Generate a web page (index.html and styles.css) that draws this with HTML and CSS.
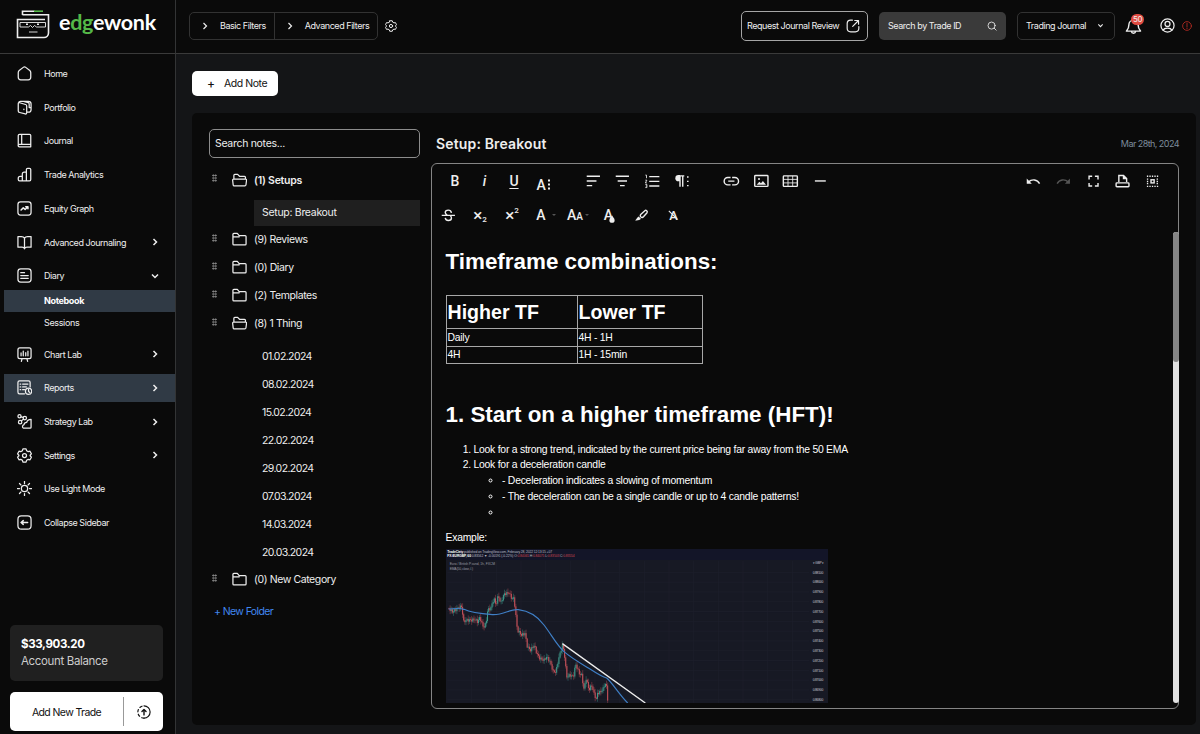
FILE: index.html
```html
<!DOCTYPE html>
<html lang="en">
<head>
  <meta charset="UTF-8">
  <meta name="viewport" content="width=device-width, initial-scale=1.0">
  <title>Edgewonk - Notebook</title>
  <link rel="stylesheet" href="styles.css">
</head>
<body>
  <div class="app">
    <div class="brand">
      <svg class="brand-face" viewBox="0 0 34 30">
        <path d="M6.500 6V2.200h12" />
        <path class="green" d="M18 2.200h9" />
        <path d="M6.500 5.800h26v18.200a4.500 4.500 0 0 1-4.500 4.500H1.500V10.500h27.500" />
        <path class="thin" d="M4 13.500h25.500v4.500H20.500l-2-1.500-2 2-2-2-2 1.500H4zM13 23h8.500" />
        <path class="dot" d="M10 15.200h2M21 15.200h2" />
      </svg>
      <div class="brand-name">e<span>dg</span>ewonk</div>
    </div>

    <header class="topbar">
      <div class="filters">
        <button><svg class="chev" viewBox="0 0 8 8"><path d="M2.500 1l3 3-3 3" /></svg>Basic Filters</button>
        <button><svg class="chev" viewBox="0 0 8 8"><path d="M2.500 1l3 3-3 3" /></svg>Advanced Filters</button>
      </div>
      <svg class="icon gear-small" viewBox="0 0 24 24"><circle cx="12" cy="12" r="3.200" /><path d="M9.500 1.500h5l.8 2.800 2.700 1.500 2.800-.7 2.200 4.200-2 2.300v.8l2 2.300-2.200 4.200-2.800-.7-2.700 1.500-.8 2.800h-5l-.8-2.800L6 18.200l-2.800.7L1 14.700l2-2.300v-.8L1 9.300l2.200-4.200 2.800.7 2.700-1.500z" /></svg>
      <div class="spacer"></div>
      <button class="review">Request Journal Review
        <svg class="icon" viewBox="0 0 24 24"><path d="M11 2H8a6 6 0 0 0-6 6v8a6 6 0 0 0 6 6h8a6 6 0 0 0 6-6v-3M11.500 12.500L21 3M15 2.500h6.500V9" /></svg>
      </button>
      <div class="trade-search">Search by Trade ID
        <svg class="icon" viewBox="0 0 24 24"><circle cx="11" cy="11" r="8.500" /><path d="M17 17l5 5" /></svg>
      </div>
      <button class="journal-select">Trading Journal
        <svg class="chev" viewBox="0 0 8 8"><path d="M1.500 2.800L4 5.300l2.500-2.500" /></svg>
      </button>
      <div class="bell">
        <svg class="icon" viewBox="0 0 24 24"><path d="M12 3a6.500 6.500 0 0 0-6.500 6.500c0 5-1.500 6.500-3.500 9h20c-2-2.500-3.500-4-3.500-9A6.500 6.500 0 0 0 12 3zM9 19c.5 3.500 5.500 3.500 6 0" /></svg>
        <span class="badge">50</span>
      </div>
      <svg class="icon user" viewBox="0 0 24 24"><circle cx="12" cy="12" r="10.500" /><circle cx="12" cy="9.500" r="4" /><path d="M5 19.500c2-4.500 12-4.500 14 0" /></svg>
      <svg class="icon alert" viewBox="0 0 24 24"><circle cx="12" cy="12" r="10.500" /><path d="M12 5.500v8M12 16.500v2" /></svg>
    </header>

    <aside class="sidebar">
      <nav>
        <a class="nav-item"><svg class="icon" viewBox="0 0 24 24"><path d="M2 10.500c0-1.500.5-2.300 1.500-3.200L10 2.200c1.300-1 2.700-1 4 0l6.500 5.100c1 .9 1.500 1.700 1.500 3.200V18a4 4 0 0 1-4 4H6a4 4 0 0 1-4-4z" /></svg>Home</a>
        <a class="nav-item"><svg class="icon" viewBox="0 0 24 24"><path d="M2 6c0-1.500.8-2 2.200-1.600l9.500 2.800c1.300.4 1.800 1 1.800 2.300v11c0 1.500-.8 2.200-2.200 1.800l-9-2.300C2.700 19.600 2 19 2 17.500zM2.500 4.500C2.800 3 3.500 2 5.500 2H18c3 0 4.500 1.300 4.500 4v9.500c0 2.500-1.500 4-4 4h-3M12 2.500l6 1.800c1.200.5 1.500 1 1.500 2.200V12h3M11 14.500v.8" /></svg>Portfolio</a>
        <a class="nav-item"><svg class="icon" viewBox="0 0 24 24"><path d="M2 20V4c0-1.500.5-2 2-2h16c1 0 2 .5 2 2v18H4c-3 0-3-4 0-4h18M7.500 2v16" /></svg>Journal</a>
        <a class="nav-item"><svg class="icon" viewBox="0 0 24 24"><path d="M8.500 22H4c-1.500 0-2-.5-2-2v-2c0-2 1-3 3-3h3.500zM8.500 22V11c0-2 1-3 3-3H15v14zM15 22V4c0-1.500.5-2 2-2h3c1.500 0 2 .5 2 2v16c0 1.500-.5 2-2 2z" /></svg>Trade Analytics</a>
        <a class="nav-item"><svg class="icon" viewBox="0 0 24 24"><rect x="1.500" y="1.500" width="21" height="21" rx="4" /><path class="bold" d="M6.500 14.500l3.500-3.500 3 2.500 4-4M14 9h3.500v3.500" /></svg>Equity Graph</a>
        <a class="nav-item"><svg class="icon" viewBox="0 0 24 24"><path d="M12 5c-1-1.800-3-2.500-5-2.500H1.500v17H8c2 0 3.500 1 4 2.500.5-1.500 2-2.500 4-2.500h6.500v-17H17c-2 0-4 .7-5 2.500zV22" /></svg>Advanced Journaling<svg class="arrow" viewBox="0 0 8 8"><path d="M2.500 1l3 3-3 3" /></svg></a>
        <a class="nav-item"><svg class="icon" viewBox="0 0 24 24"><rect x="1.500" y="1.500" width="21" height="21" rx="4.500" /><path d="M6 7.500h6M6 12h12M6 16.500h12" /></svg>Diary<svg class="arrow" viewBox="0 0 8 8"><path d="M1 2.500l3 3 3-3" /></svg></a>
        <div class="sub-nav">
          <a class="active">Notebook</a>
          <a>Sessions</a>
        </div>
        <a class="nav-item"><svg class="icon" viewBox="0 0 24 24"><rect x="1.500" y="1.500" width="21" height="17" rx="3" /><path d="M8 19l-1 4M16 19l1 4M6.500 14V9.500M10 14V6.500M14 14V9M17.500 14V6.500" /></svg>Chart Lab<svg class="arrow" viewBox="0 0 8 8"><path d="M2.500 1l3 3-3 3" /></svg></a>
        <a class="nav-item active"><svg class="icon" viewBox="0 0 24 24"><path d="M21 11V4c0-1.500-.8-2.500-2.500-2.500H4C2.300 1.500 1.500 2.500 1.500 4v15c0 2 1 3 2.500 3h8M5 6.500h1M9 6.500h8.500M5 11h1M9 11h6M5 15.500h1M9 15.500h3" /><circle cx="18.500" cy="18" r="5" /><path d="M18.500 15v3.500l2 1.500" /></svg>Reports<svg class="arrow" viewBox="0 0 8 8"><path d="M2.500 1l3 3-3 3" /></svg></a>
        <a class="nav-item"><svg class="icon" viewBox="0 0 24 24"><circle cx="4" cy="3.500" r="2.500" /><circle cx="5" cy="13" r="2.700" /><circle cx="12.500" cy="6.500" r="2.700" /><path d="M22.500 8.500V21c0 1-.5 1.500-1.500 1.500H10c-2-1.500-1.500-4.500 1-5 .5-2.500 2-4 4.500-4 .5-3 3-5 7-5zM6.500 4.500l3.500 1M7 11l3.300-2.700" /></svg>Strategy Lab<svg class="arrow" viewBox="0 0 8 8"><path d="M2.500 1l3 3-3 3" /></svg></a>
        <a class="nav-item"><svg class="icon" viewBox="0 0 24 24"><circle cx="12" cy="12" r="3.200" /><path d="M9.500 1.500h5l.8 2.800 2.700 1.500 2.800-.7 2.200 4.200-2 2.300v.8l2 2.300-2.200 4.200-2.800-.7-2.700 1.500-.8 2.800h-5l-.8-2.800L6 18.200l-2.800.7L1 14.700l2-2.300v-.8L1 9.300l2.200-4.200 2.800.7 2.700-1.500z" /></svg>Settings<svg class="arrow" viewBox="0 0 8 8"><path d="M2.500 1l3 3-3 3" /></svg></a>
        <a class="nav-item"><svg class="icon" viewBox="0 0 24 24"><circle cx="12" cy="12" r="5" /><path d="M12 .5v3.500M12 20v3.500M.5 12H4M20 12h3.500M4 4l2.300 2.300M17.700 17.700L20 20M4 20l2.300-2.300M17.700 6.300L20 4" /></svg>Use Light Mode</a>
        <a class="nav-item"><svg class="icon" viewBox="0 0 24 24"><rect x="1.500" y="1.500" width="21" height="21" rx="5.500" /><path class="bold" d="M6.500 12H17M10 9l-3.500 3 3.500 3" /></svg>Collapse Sidebar</a>
      </nav>

      <div class="balance">
        <strong>$33,903.20</strong>
        <span>Account Balance</span>
      </div>
      <div class="add-trade">
        <span>Add New Trade</span>
        <i><svg class="icon" viewBox="0 0 24 24"><path d="M12 1.500a10.500 10.500 0 0 1 0 21" /><path stroke-dasharray="4 4.200" d="M12 22.500a10.500 10.500 0 0 1 0-21" /><path class="bold" d="M12 17V8M8.500 11L12 7.500l3.500 3.500" /></svg></i>
      </div>
    </aside>

    <main class="main">
      <button class="add-note"><b>+</b>Add Note</button>

      <section class="panel">
        <div class="notes">
          <div class="notes-search">Search notes...</div>
          <div id="folders"></div>
          <a class="new-folder">+ New Folder</a>
        </div>

        <div class="note">
          <div class="note-head">
            <h3>Setup: Breakout</h3>
            <time>Mar 28th, 2024</time>
          </div>
          <div class="editor">
            <div class="toolbar">
              <div class="tools">
                <span class="t-bold">B</span>
                <span class="t-italic">i</span>
                <span class="t-under">U</span>
                <span class="t-more">A<svg viewBox="0 0 3 11"><path d="M0 1.500h2M0 5.500h2M0 9.500h2" /></svg></span>
              </div>
              <div class="tools">
                <span><svg viewBox="0 0 24 24"><path d="M3.500 5.500h17M3.500 11.500h12.500M3.500 17.500h7" /></svg></span>
                <span><svg viewBox="0 0 24 24"><path d="M3.500 5.500h17M6 11.500h12M9 17.500h6" /></svg></span>
                <span><svg viewBox="0 0 24 24"><path d="M8 6h13M8 12h13M8 18h13" /><path class="fine" d="M3 4h1.500v4M3 10.500h2L3 14h2M3 16h2v4H3M3.500 18H5" /></svg></span>
                <span><svg viewBox="0 0 24 24"><path d="M9 5v14M12.500 5v14M14.500 5H8" /><path class="fill" d="M9 4H7a4 4 0 0 0 0 8h2z" /><path d="M18 6.500h2M18 12h2M18 17.500h2" /></svg></span>
              </div>
              <div class="tools">
                <span><svg viewBox="0 0 24 24"><path d="M11 7H7.500a4.500 4.500 0 0 0 0 9.500H11M13 7h3.500a4.500 4.500 0 0 1 0 9.500H13M8 11.700h8" /></svg></span>
                <span><svg viewBox="0 0 24 24"><rect x="3.500" y="4.500" width="17" height="14" rx="1" /><path class="fill" d="M6 16.500l3.500-4 2 2 2.500-3 4 5z" /><circle class="fill" cx="9" cy="9" r="1.300" /></svg></span>
                <span><svg viewBox="0 0 24 24"><rect x="3" y="5" width="18" height="13.500" rx="1" /><path class="fine" d="M3 9.500h18M3 14h18M9 5v13.500M15 5v13.500" /></svg></span>
                <span><svg viewBox="0 0 24 24"><path d="M5 11.500h14" /></svg></span>
              </div>
              <div class="spacer"></div>
              <div class="tools">
                <span><svg viewBox="0 0 24 24"><path d="M20 15c-3-5.500-9.500-6.500-14.500-2" /><path class="fill" d="M3.500 8.500v6.500H10z" /></svg></span>
                <span class="disabled"><svg viewBox="0 0 24 24"><path d="M4 15c3-5.500 9.500-6.500 14.500-2" /><path class="fill" d="M20.500 8.500v6.500H14z" /></svg></span>
                <span><svg viewBox="0 0 24 24"><path d="M6.500 9.500v-4h4M14 5.500h4v4M18 14v4h-4M10.500 18h-4v-4" /></svg></span>
                <span><svg viewBox="0 0 24 24"><rect x="4" y="14" width="16.500" height="5" rx="1" /><path d="M7.500 13V4.500h6l4 4V13M13.500 5v3.500h4" /></svg></span>
                <span><svg viewBox="0 0 24 24"><path class="dots" d="M5 5.500h14.500M5 18.500h14.500M5 9.200h2M5 12h2M5 14.800h2M17.500 9.200h2M17.500 12h2M17.500 14.800h2" /><rect x="10.300" y="10" width="4" height="4" /></svg></span>
              </div>
            </div>
            <div class="toolbar second">
              <span><svg viewBox="0 0 24 24"><path class="thin" d="M3.500 12h17M16 8.700C15.500 6.300 14 5.300 12 5.300c-2.700 0-4 1.400-4 3.200 0 1.400 1 2.400 2.500 3M8 15.300c.5 2.400 2 3.400 4 3.400 2.700 0 4-1.400 4-3.200 0-1.400-.5-2.400-1.500-3" /></svg></span>
              <span class="t-sub">×<sub>2</sub></span>
              <span class="t-sup">×<sup>2</sup></span>
              <span class="t-drop">A<i></i></span>
              <span class="t-drop">A<small>A</small><i></i></span>
              <span class="t-color">A<svg viewBox="0 0 8 10"><path class="fill" d="M4 0C5 2.500 7.500 4 7.500 6.500a3.500 3.500 0 0 1-7 0C.5 4 3 2.500 4 0z" /></svg></span>
              <span class="t-brush"><svg viewBox="0 0 24 24"><path d="M11.500 10.500l5-4.500c1.500-1.300 4 1 2.800 2.600L15 13.500c-1.200 1.300-2.300 1.600-3.500.6s-1.200-2.400 0-3.600z" /><path class="fill" d="M8.500 13.500l3 3c-1.500 2-4.500 2.300-7.500 2 2-1 2-3.500 4.500-5z" /></svg></span>
              <span class="t-clear">A<svg viewBox="0 0 12 12"><path d="M1 1l10 10" /></svg></span>
            </div>
            <div class="content">
              <div class="doc">
                <h1>Timeframe combinations:</h1>
                <table>
                  <tr><th>Higher TF</th><th>Lower TF</th></tr>
                  <tr><td>Daily</td><td>4H - 1H</td></tr>
                  <tr><td>4H</td><td>1H - 15min</td></tr>
                </table>
                <h1 class="step">1. Start on a higher timeframe (HFT)!</h1>
                <ol>
                  <li>Look for a strong trend, indicated by the current price being far away from the 50 EMA</li>
                  <li>Look for a deceleration candle
                    <ul>
                      <li>- Deceleration indicates a slowing of momentum</li>
                      <li>- The deceleration can be a single candle or up to 4 candle patterns!</li>
                      <li></li>
                    </ul>
                  </li>
                </ol>
                <p>Example:</p>
                <svg class="chart" viewBox="18 57 1146 462">
                  <rect class="chart-bg" x="18" y="57" width="1146" height="462" />
                  <rect class="chart-top" x="18" y="57" width="1146" height="33" />
                  <text class="c-head" x="22" y="70" textLength="314"><tspan class="c-bold">TradeCiety</tspan> published on TradingView.com, February 28, 2022 12:13:15 +07</text>
                  <text class="c-head" x="22" y="82" textLength="382"><tspan class="c-bold">FX:EURGBP, 60</tspan> 0.83562 ▼ -0.00191 (-0.22%) O:<tspan class="c-red">0.84065</tspan> H:<tspan class="c-red">0.84075</tspan> L:<tspan class="c-red">0.83503</tspan> C:<tspan class="c-red">0.83554</tspan></text>
                  <text class="c-sub" x="29" y="106" textLength="136">Euro / British Pound, 1h, FXCM</text>
                  <text class="c-sub" x="29" y="119" textLength="70">EMA (50, close, 0)</text>
                  <g id="grid"></g>
                  <g id="candles"></g>
                  <path class="ema" d="M26 237C45 235 60 234 72 238C95 250 130 252 160 254C195 254 210 236 235 239C270 243 295 262 312 285C335 315 350 345 372 365C395 385 425 402 450 417C470 430 485 440 500 444C517 458 535 490 563 519" />
                  <path class="trend" d="M367 341L616 519" />
                </svg>
              </div>
              <div class="scrollbar"><div class="thumb"></div></div>
            </div>
          </div>
        </div>
      </section>
    </main>
  </div>

  <script>
    var folders = [
      { name: 'Setups', notes: ['Setup: Breakout'], open: true, selected: true },
      { name: 'Reviews', count: 9 },
      { name: 'Diary', count: 0 },
      { name: 'Templates', count: 2 },
      { name: '1 Thing', open: true, notes: ['01.02.2024', '08.02.2024', '15.02.2024', '22.02.2024', '29.02.2024', '07.03.2024', '14.03.2024', '20.03.2024'] },
      { name: 'New Category', count: 0 }
    ];
    var closedIcon = '<path d="M1.500 19V3.500C1.500 2.500 2 2 3 2h5.500l3 3.500H21c1 0 1.500.5 1.500 1.500v12c0 1-.5 1.500-1.500 1.500H3c-1 0-1.500-.5-1.500-1.500zM1.500 7.500h10" />';
    var openIcon = '<path d="M3 9.500V3.500C3 2.500 3.500 2 4.500 2H9l3 3h8c1 0 1.500.5 1.500 1.500v3M1 11c0-1 .5-1.500 1.500-1.500h19.500c1 0 1.500.5 1.300 1.500l-1 8c-.2 1-.8 1.500-1.800 1.500h-17c-1 0-1.500-.5-1.600-1.500z" />';

    var html = '';
    folders.forEach(function(folder) {
      var count = folder.notes ? folder.notes.length : folder.count;
      html += '<div class="folder' + (folder.selected ? ' selected' : '') + '">' +
        '<span class="grip"></span>' +
        '<svg class="icon" viewBox="0 0 24 22">' + (folder.open ? openIcon : closedIcon) + '</svg>' +
        '(' + count + ') ' + folder.name + '</div>';
      if (folder.notes) {
        html += '<div class="note-list">';
        folder.notes.forEach(function(note) {
          html += '<div class="' + (folder.selected ? 'note-row active' : 'note-row') + '">' + note + '</div>';
        });
        html += '</div>';
      }
    });
    document.getElementById('folders').innerHTML = html;

    // Grid lines and price scale
    var grid = '';
    for (var i = 0; i < 14; i++) {
      var gy = 127 + i * 29.4;
      grid += '<path class="grid-line" d="M22 ' + gy + 'H1108" />';
      grid += '<text class="c-axis" x="1118" y="' + (gy + 4) + '" textLength="32">' + (0.881 - i * 0.001).toFixed(5) + '</text>';
    }
    for (var gx = 95; gx < 1100; gx += 74) {
      grid += '<path class="grid-line" d="M' + gx + ' 92V519" />';
    }
    grid += '<text class="c-axis" x="1118" y="102" textLength="34">▾ GBP ▾</text>';
    document.getElementById('grid').innerHTML = grid;

    // Candles follow the closing prices between these points
    var points = [[25,235],[38,245],[60,230],[66,230],[70,275],[80,270],[95,270],[105,268],[112,275],[120,262],[130,292],[138,280],[143,240],[152,235],[162,205],[168,225],[175,195],[182,220],[192,192],[207,188],[215,205],[222,205],[228,260],[232,300],[245,315],[255,310],[262,350],[272,360],[283,345],[290,370],[300,385],[312,390],[320,380],[330,395],[340,425],[348,425],[356,385],[368,343],[374,380],[380,440],[390,435],[400,440],[407,402],[418,430],[425,435],[433,485],[437,440],[447,480],[455,465],[462,490],[470,510],[472,490],[482,485],[490,475],[495,460],[500,470],[504,519]];
    var candles = '';
    var prev = points[0][1];
    var seg = 0;
    for (var x = 27, n = 0; x <= 503; x += 3.4, n++) {
      while (points[seg + 1][0] < x) seg++;
      var a = points[seg], b = points[seg + 1];
      var y = a[1] + (b[1] - a[1]) * (x - a[0]) / (b[0] - a[0]) + Math.sin(n * 2.3) * 4;
      var cls = y > prev ? 'down' : 'up';
      var high = Math.min(y, prev), low = Math.max(y, prev);
      var wick = 2 + Math.abs(Math.sin(n * 5.1)) * 9;
      candles += '<path class="' + cls + ' wick" d="M' + x + ' ' + (high - wick) + 'V' + (low + wick) + '" />';
      candles += '<path class="' + cls + '" d="M' + x + ' ' + high + 'V' + (low + 1) + '" />';
      prev = y;
    }
    document.getElementById('candles').innerHTML = candles;
  </script>
</body>
</html>
```
FILE: styles.css
```css
* {
  box-sizing: border-box;
}
body {
  margin: 0;
  font-family: Inter, "Noto Sans", sans-serif;
  font-size: 9px;
  letter-spacing: -0.45px;
  color: #eee;
  background-color: #0a0a0a;
  overflow: hidden;
}
button {
  font: inherit;
  letter-spacing: inherit;
  color: inherit;
  background: none;
  border: none;
  padding: 0;
  text-align: left;
}
svg {
  fill: none;
  stroke: currentColor;
  flex: none;
}
.icon {
  stroke-width: 2;
  stroke-linecap: round;
  stroke-linejoin: round;
}
.icon .bold {
  stroke-width: 2.4;
}
.chev {
  width: 8px;
  height: 8px;
  stroke-width: 1.2;
}
.spacer {
  flex: 1;
}
.app {
  display: grid;
  grid-template-columns: 176px 1fr;
  grid-template-rows: 54px 1fr;
  width: 1200px;
  height: 734px;
}

/* Header */
.brand {
  display: flex;
  align-items: flex-start;
  padding: 9px 0 0 16px;
  border-right: 1px solid #333435;
  border-bottom: 1px solid #3a3a3a;
}
.brand-face {
  width: 34px;
  height: 30px;
  stroke-width: 1.6;
}
.brand-face .green {
  stroke: #55b848;
}
.brand-face .thin {
  stroke-width: 0.9;
}
.brand-face .dot {
  stroke-width: 1.5;
}
.brand-name {
  margin-left: 9px;
  font-family: Lato, sans-serif;
  font-size: 21.500px;
  font-weight: 700;
  line-height: 27px;
  letter-spacing: -0.3px;
  color: #fff;
}
.brand-name span {
  color: #55b848;
}
.topbar {
  display: flex;
  align-items: center;
  padding: 0 8px 2px 13px;
  border-bottom: 1px solid #3a3a3a;
}
.filters {
  display: flex;
  height: 28px;
  border: 1px solid #323232;
  border-radius: 5px;
}
.filters button {
  display: flex;
  align-items: center;
  gap: 11px;
  padding: 0 8px 0 11px;
}
.filters button + button {
  border-left: 1px solid #323232;
}
.gear-small {
  width: 12px;
  height: 12px;
  margin-left: 7px;
}
.review {
  display: flex;
  align-items: center;
  justify-content: space-between;
  width: 127px;
  height: 30px;
  padding: 0 7px 0 5px;
  border: 1px solid #a5a5a5;
  border-radius: 5px;
  margin-right: 11px;
}
.review .icon {
  width: 14px;
  height: 14px;
}
.trade-search {
  display: flex;
  align-items: center;
  justify-content: space-between;
  width: 127px;
  height: 28px;
  padding: 0 9px;
  border-radius: 5px;
  background-color: #3a3a3a;
  margin-right: 11px;
}
.trade-search .icon {
  width: 10px;
  height: 10px;
}
.journal-select {
  display: flex;
  align-items: center;
  justify-content: space-between;
  width: 98px;
  height: 28px;
  padding: 0 10px 0 8px;
  border: 1px solid #323232;
  border-radius: 5px;
}
.journal-select .chev {
  width: 7px;
  height: 7px;
}
.bell {
  position: relative;
  margin-left: 10px;
  height: 16px;
}
.bell .icon {
  width: 17px;
  height: 17px;
}
.badge {
  position: absolute;
  left: 6px;
  top: -4px;
  width: 13px;
  height: 11px;
  border-radius: 6px;
  background-color: #e04b41;
  font-size: 8px;
  line-height: 11px;
  text-align: center;
}
.user {
  width: 15px;
  height: 15px;
  margin-left: 18px;
}
.alert {
  width: 10px;
  height: 10px;
  margin-left: 7px;
  color: #b92d24;
}

/* Sidebar */
.sidebar {
  display: flex;
  flex-direction: column;
  padding: 5.500px 0 3px 4px;
  border-right: 1px solid #333435;
}
.nav-item {
  display: flex;
  align-items: center;
  height: 28.2px;
  margin-bottom: 5.5px;
  padding: 0 16px 0 12.500px;
}
.nav-item .icon {
  width: 15px;
  height: 15px;
  margin-right: 12.500px;
}
.nav-item .arrow {
  width: 8px;
  height: 8px;
  margin-left: auto;
  stroke-width: 1.5;
}
.sub-nav {
  margin: -5.5px 0 5.5px;
}
.sub-nav a {
  display: block;
  height: 22.4px;
  line-height: 22.4px;
  padding-left: 40px;
  letter-spacing: -0.35px;
}
.sidebar .active {
  background-color: #303a45;
}
.sub-nav .active {
  font-weight: 700;
  color: #fff;
}
.balance {
  display: flex;
  flex-direction: column;
  justify-content: center;
  gap: 3px;
  width: 153px;
  height: 56px;
  margin: auto 0 11px 6px;
  padding: 0 0 1px 11px;
  border-radius: 5px;
  background-color: #202020;
  font-size: 11.500px;
  line-height: 14px;
  letter-spacing: -0.35px;
  color: #ccc;
}
.balance strong {
  color: #fff;
}
.add-trade {
  display: flex;
  align-items: center;
  width: 153px;
  height: 39px;
  margin-left: 6px;
  border-radius: 5px;
  background-color: #fff;
  color: #111;
  font-size: 10.500px;
  letter-spacing: -0.6px;
}
.add-trade span {
  flex: 1;
  text-align: center;
  padding-top: 1px;
}
.add-trade i {
  display: flex;
  align-items: center;
  justify-content: center;
  width: 40px;
  height: 29px;
  border-left: 1px solid #999;
}
.add-trade .icon {
  width: 14px;
  height: 14px;
}

/* Notes */
.main {
  padding: 17px 4px 9px 16px;
  background-color: #141517;
}
.add-note {
  display: flex;
  align-items: center;
  width: 86px;
  height: 25px;
  padding-left: 15px;
  border-radius: 5px;
  background-color: #fff;
  color: #111;
  font-size: 10.500px;
}
.add-note b {
  width: 17px;
  font-size: 12px;
  font-weight: 500;
}
.panel {
  display: flex;
  gap: 11px;
  height: 612px;
  margin-top: 17px;
  padding: 16px 17px;
  border-radius: 5px;
  background-color: #0a0a0a;
}
.notes {
  width: 211px;
  font-size: 10.500px;
}
.notes-search {
  height: 29px;
  padding-left: 5px;
  border: 1px solid #8c8c8c;
  border-radius: 5px;
  line-height: 28px;
  letter-spacing: -0.3px;
  margin-bottom: 8px;
}
.folder {
  display: flex;
  align-items: center;
  height: 28px;
  letter-spacing: -0.4px;
}
.folder.selected {
  font-weight: 600;
  letter-spacing: -0.25px;
}
.folder .icon {
  width: 15px;
  height: 14px;
  margin: -1px 7px 0 15px;
}
.grip {
  width: 5px;
  height: 8px;
  margin: -4px 0 0 3px;
  background-image: radial-gradient(circle, #999 0.8px, transparent 1px);
  background-size: 2.500px 2.700px;
}
.note-list {
  padding: 5.500px 0 0 45px;
  letter-spacing: -0.6px;
}
.note-row {
  height: 28px;
  line-height: 28px;
  padding-left: 8px;
}
.note-row:last-child {
  height: 26.500px;
}
.note-row.active {
  height: 26px;
  line-height: 26px;
  letter-spacing: -0.3px;
  background-color: #1f1f1f;
}
.new-folder {
  display: block;
  margin: 11px 0 0 5px;
  letter-spacing: -0.6px;
  color: #4187f0;
}

/* Editor */
.note {
  width: 748px;
}
.note-head {
  display: flex;
  align-items: center;
  justify-content: space-between;
  height: 34px;
  padding: 0 0 5px 5px;
}
.note-head h3 {
  margin: 0;
  font-size: 14px;
  font-weight: 600;
  letter-spacing: 0.15px;
}
.note-head time {
  color: #7d8c9b;
  letter-spacing: -0.55px;
}
.editor {
  height: 546px;
  border: 1px solid #858585;
  border-radius: 6px;
}
.toolbar {
  display: flex;
  gap: 20px;
  height: 34px;
  padding: 0 11px 0 8px;
  font-family: Roboto, sans-serif;
  font-size: 14px;
  font-weight: 500;
  letter-spacing: 0;
}
.tools {
  display: flex;
}
.toolbar span {
  display: flex;
  align-items: center;
  justify-content: center;
  width: 29.600px;
  height: 34px;
}
.toolbar svg {
  width: 18.700px;
  height: 18.700px;
  stroke-width: 1.8;
}
.toolbar .fill {
  fill: currentColor;
  stroke: none;
}
.toolbar .fine {
  stroke-width: 1.1;
}
.toolbar .dots {
  stroke-dasharray: 1.700 1.500;
}
.toolbar .disabled {
  color: #555;
}
.toolbar .t-italic {
  font-style: italic;
}
.toolbar .t-under {
  text-decoration: underline;
  text-underline-offset: 2px;
}
.toolbar .t-more {
  padding-top: 7px;
}
.toolbar .t-more svg {
  width: 3px;
  height: 11px;
  margin-left: 2px;
}
.toolbar.second {
  gap: 0;
  padding-left: 0;
}
.second span {
  width: 32px;
}
.second sub,
.second sup {
  font-size: 8px;
  line-height: 8px;
}
.second sub {
  margin-top: 9px;
}
.second sup {
  margin-top: -9px;
}
.second .t-sub,
.second .t-sup {
  font-size: 17px;
}
.second small {
  font-size: 10px;
  margin-top: 3px;
}
.second .t-drop {
  padding-left: 4px;
}
.t-drop i {
  margin-left: 6px;
  border: 2.500px solid transparent;
  border-top-color: #555;
  border-bottom: none;
}
.t-drop small + i {
  margin-left: 2px;
}
.second .t-color {
  padding-left: 3px;
}
.second .t-color svg {
  width: 6px;
  height: 8px;
  margin: 8px 0 0 -4px;
}
.second .t-brush {
  padding-left: 2px;
}
.second .t-clear {
  padding-left: 3px;
  font-size: 13px;
}
.second .t-clear svg {
  width: 10px;
  height: 10px;
  margin-left: -10px;
  stroke-width: 1.4;
}
.content {
  display: flex;
  justify-content: space-between;
  height: 471px;
  font-family: "Liberation Sans", Arial, sans-serif;
  font-size: 10.400px;
  letter-spacing: -0.24px;
  color: #fff;
}
.doc {
  width: 720px;
  padding: 16px 0 0 13.500px;
}
.doc h1 {
  margin: 0;
  font-size: 22.400px;
  line-height: 28px;
  letter-spacing: 0;
}
.doc table {
  width: 257px;
  margin-top: 19px;
  border-collapse: collapse;
  table-layout: fixed;
}
.doc th,
.doc td {
  height: 17.500px;
  padding: 0 0 0 1px;
  border: 1px solid #a8a8a8;
  text-align: left;
}
.doc th {
  height: 33px;
  font-size: 19.600px;
  letter-spacing: 0;
}
.doc th:first-child {
  width: 131px;
}
.doc .step {
  margin-top: 36.500px;
}
.doc ol {
  margin: 13px 0 0;
  padding-left: 28px;
  line-height: 15.800px;
}
.doc ul {
  padding-left: 28.500px;
  list-style: circle;
}
.doc p {
  margin: 9.500px 0 3px;
  line-height: 16px;
}
.scrollbar {
  width: 6px;
  height: 471px;
  margin: -0.5px -1px 0 0;
  border-radius: 3px;
  background-color: #e2e2e2;
}
.thumb {
  height: 130px;
  border-radius: 3px;
  background-color: #858585;
}

/* Chart */
.chart {
  display: block;
  width: 382px;
  height: 154px;
  font-family: "Liberation Sans", Arial, sans-serif;
}
.chart-bg {
  fill: #171924;
  stroke: none;
}
.chart-top {
  fill: #131528;
  stroke: none;
}
.chart text {
  stroke: none;
  letter-spacing: 0;
}
.c-head {
  font-size: 10px;
  fill: #b9bbc4;
}
.c-bold {
  font-weight: 700;
  fill: #fff;
}
.c-red {
  fill: #c94650;
}
.c-sub {
  font-size: 10px;
  fill: #9799a3;
}
.c-axis {
  font-size: 10px;
  fill: #c4c6d0;
}
.grid-line {
  stroke: #1e202c;
  stroke-width: 2;
}
.up,
.down {
  stroke-width: 3;
}
.wick {
  stroke-width: 1.2;
}
.up {
  stroke: #3f9d8f;
}
.down {
  stroke: #c9525a;
}
.ema {
  stroke: #3f7fc6;
  stroke-width: 3.500;
}
.trend {
  stroke: #eee;
  stroke-width: 4;
}
```
